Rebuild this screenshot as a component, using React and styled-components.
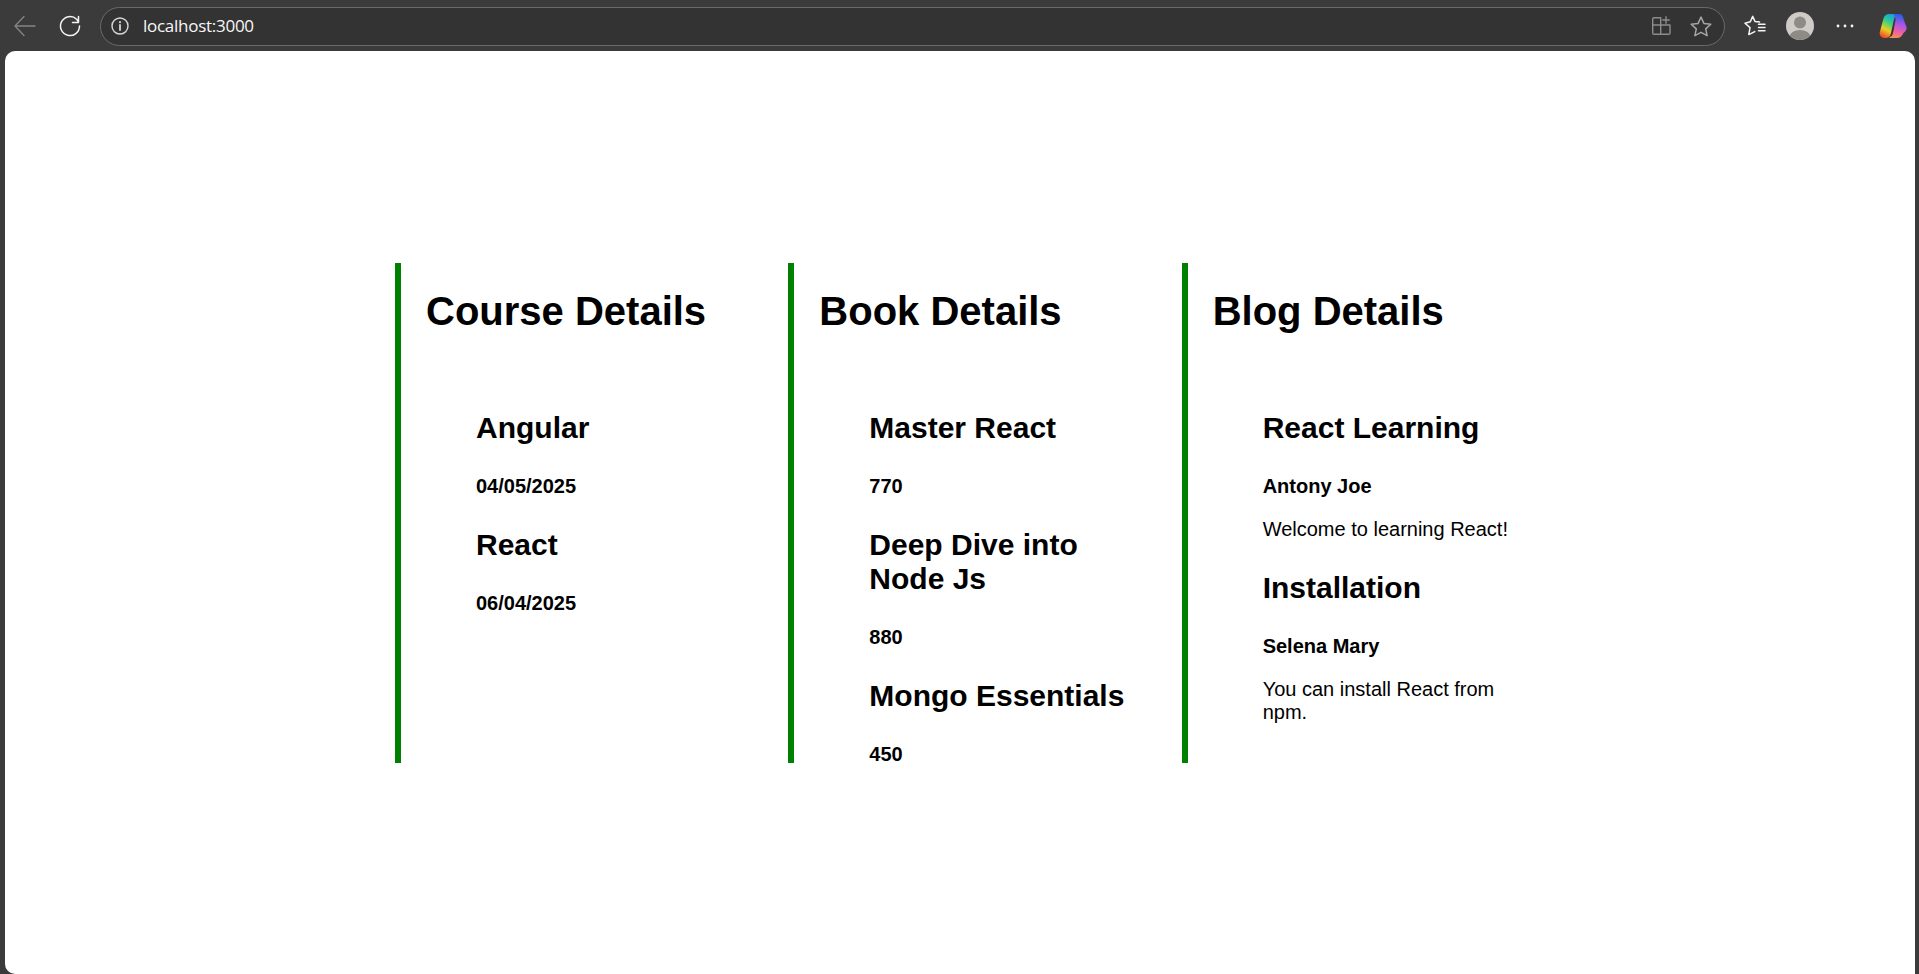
import React from "react";
import styled, { createGlobalStyle } from "styled-components";

const Global = createGlobalStyle`
  html, body { margin: 0; padding: 0; height: 100%; background: #3b3b3b; overflow: hidden; }
  #root { height: 100%; }
`;

const Window = styled.div`
  height: 974px;
  display: flex;
  flex-direction: column;
  background: #3b3b3b;
  font-family: "Liberation Sans", Arial, sans-serif;
  color: #000;
`;

const Toolbar = styled.header`
  height: 51px;
  flex: none;
  display: flex;
  align-items: center;
  box-sizing: border-box;
  padding: 1px 8px 0 0;
`;

const IconSlot = styled.span`
  width: ${(p) => p.$w}px;
  margin-right: ${(p) => p.$after || 0}px;
  height: 36px;
  flex: none;
  display: flex;
  align-items: center;
  justify-content: center;
`;

const AddressBar = styled.div`
  flex: 1;
  height: 39px;
  display: flex;
  align-items: center;
  box-sizing: border-box;
  padding: 0 11px 0 9px;
  background: #333333;
  border: 1px solid #6a6a6a;
  border-radius: 20px;
`;

const Url = styled.span`
  flex: 1;
  margin-left: 13px;
  padding-bottom: 2px;
  font-family: "Open Sans", "Liberation Sans", sans-serif;
  font-size: 17px;
  letter-spacing: -0.27px;
  color: #f7f7f7;
`;

const AddressAction = styled.span`
  width: 24px;
  height: 24px;
  margin-left: ${(p) => p.$gap || 0}px;
  flex: none;
  display: flex;
`;

const Page = styled.main`
  flex: 1;
  margin: 0 4px 0 5px;
  background: #fff;
  border-radius: 10px 10px 0 10px;
  display: flex;
  align-items: center;
  padding: 0 340px 0 390px;
  box-sizing: border-box;
`;

const Columns = styled.div`
  flex: 1;
  height: 500px;
  display: flex;
`;

const Section = styled.section`
  flex: 1;
  min-width: 0;
  border-left: 6px solid green;
  padding: 0 25px;
`;

const Title = styled.h1`
  margin: 25px 0 0;
  font-size: 40px;
  line-height: 46px;
  font-weight: 700;
`;

const Items = styled.div`
  margin-top: 77px;
`;

const Item = styled.article`
  margin: 0 25px 0 50px;
`;

const Name = styled.h2`
  margin: 0;
  padding-top: ${(p) => (p.$first ? 0 : 30)}px;
  font-size: 30px;
  line-height: 34px;
  font-weight: 700;
`;

const Meta = styled.h3`
  margin: 30px 0 0;
  font-size: 20px;
  line-height: 23px;
  font-weight: 700;
`;

const Body = styled.p`
  margin: 20px 0 0;
  font-size: 20px;
  line-height: 23px;
`;

const courses = [
  { name: "Angular", meta: "04/05/2025" },
  { name: "React", meta: "06/04/2025" },
];
const books = [
  { name: "Master React", meta: "770" },
  { name: "Deep Dive into Node Js", meta: "880" },
  { name: "Mongo Essentials", meta: "450" },
];
const blogs = [
  { name: "React Learning", meta: "Antony Joe", body: "Welcome to learning React!" },
  { name: "Installation", meta: "Selena Mary", body: "You can install React from npm." },
];

const Column = ({ title, items }) => (
  <Section>
    <Title>{title}</Title>
    <Items>
      {items.map((it, i) => (
        <Item key={it.name}>
          <Name $first={i === 0}>{it.name}</Name>
          <Meta>{it.meta}</Meta>
          {it.body && <Body>{it.body}</Body>}
        </Item>
      ))}
    </Items>
  </Section>
);

const Stroke = ({ w = 24, h = 24, c = "#e8e8e8", sw = 1.3, children }) => (
  <svg width={w} height={h} viewBox={`0 0 ${w} ${h}`} fill="none" stroke={c} strokeWidth={sw} strokeLinecap="round" strokeLinejoin="round">
    {children}
  </svg>
);

export default function App() {
  return (
    <Window>
      <Global />
      <Toolbar>
        <IconSlot $w={50}>
          <Stroke c="#858585"><path d="M22 12H2.5M11 2.5L2 12l9 9.5" /></Stroke>
        </IconSlot>
        <IconSlot $w={40} $after={10}>
          <Stroke c="#f4f4f4" sw={1.5}><path d="M21.5 12a9.5 9.5 0 1 1-2.9-6.8L20.5 8M20.5 2.5V8.5h-6" /></Stroke>
        </IconSlot>
        <AddressBar>
          <Stroke w={20} h={20} c="#d8d8d8" sw={1.4}><circle cx="10" cy="10" r="8" /><path d="M10 9v5" strokeWidth="1.8" /><path d="M10 6v.3" strokeWidth="2" /></Stroke>
          <Url>localhost:3000</Url>
          <AddressAction>
            <Stroke c="#8c8c8c" sw={1.4}>
              <path d="M11.7 3.7H5a1.3 1.3 0 0 0-1.3 1.3v14a1.3 1.3 0 0 0 1.3 1.3h14.7a1.3 1.3 0 0 0 1.3-1.3V11H5M11.7 3.7V20.3M3.7 11h8M17 2.7v6.6M13.7 6h6.6" />
            </Stroke>
          </AddressAction>
          <AddressAction $gap={16}>
            <Stroke c="#a6a6a6" sw={1.5}>
              <path d="M12 3l2.9 6.4 6.9.8-5.1 4.7 1.4 6.8-6.1-3.4-6.1 3.4 1.4-6.8-5.1-4.7 6.9-.8z" />
            </Stroke>
          </AddressAction>
        </AddressBar>
        <IconSlot $w={60}>
          <Stroke c="#f4f4f4" sw={1.5}>
            <path d="M16.5 8.1L12.1 7.6 9.7 2.4 7.3 7.8 2 9.3l5 4.3-1.2 7 6-3" />
            <path d="M15.5 10.3H22M15.5 13.5H22M15.5 16.7H22" />
          </Stroke>
        </IconSlot>
        <IconSlot $w={30}>
          <svg width="28" height="28" viewBox="0 0 28 28">
            <defs><clipPath id="av"><circle cx="14" cy="14" r="14" /></clipPath></defs>
            <g clipPath="url(#av)">
              <rect width="28" height="28" fill="#cfccc8" />
              <circle cx="14" cy="10.5" r="6" fill="#8e8a85" />
              <ellipse cx="14" cy="25" rx="10.5" ry="7" fill="#8e8a85" />
            </g>
          </svg>
        </IconSlot>
        <IconSlot $w={60}>
          <svg width="20" height="4" viewBox="0 0 20 4" fill="#f4f4f4">
            <circle cx="3" cy="2" r="1.4" /><circle cx="10" cy="2" r="1.4" /><circle cx="17" cy="2" r="1.4" />
          </svg>
        </IconSlot>
        <IconSlot $w={36}>
          <svg width="28" height="26" viewBox="0 0 28 26">
            <defs>
              <linearGradient id="cp1" x1="0.7" y1="0" x2="0.3" y2="1">
                <stop offset="0" stopColor="#1b9ae8" />
                <stop offset="0.35" stopColor="#2fd08a" />
                <stop offset="0.68" stopColor="#e8d020" />
                <stop offset="1" stopColor="#f04a30" />
              </linearGradient>
              <linearGradient id="cp2" x1="0.6" y1="0" x2="0.4" y2="1">
                <stop offset="0" stopColor="#1b60e8" />
                <stop offset="0.4" stopColor="#a855e8" />
                <stop offset="0.75" stopColor="#f060a0" />
                <stop offset="1" stopColor="#f29050" />
              </linearGradient>
            </defs>
            <path d="M10 1H19C16.5 2 15.5 4 14.8 7L12 20C11.4 23.5 9 25 6.5 25H5.5C2.5 25 0 22.5 0.8 19L4.5 5.5C5.3 2.5 7.5 1 10 1Z" fill="url(#cp1)" />
            <path d="M14 1H20.5C23 1 24 3 24.5 6L27.5 14C28 17 26.5 18 24.5 20C23 23 21 25 18 25H9.5C12 24 13.3 22 14 19.5L16.5 8C17 5 15.5 2 14 1Z" fill="url(#cp2)" />
            <path d="M14.5 14L12.3 23" stroke="#4a2a20" strokeWidth="1.2" fill="none" />
          </svg>
        </IconSlot>
      </Toolbar>
      <Page>
        <Columns>
          <Column title="Course Details" items={courses} />
          <Column title="Book Details" items={books} />
          <Column title="Blog Details" items={blogs} />
        </Columns>
      </Page>
    </Window>
  );
}
